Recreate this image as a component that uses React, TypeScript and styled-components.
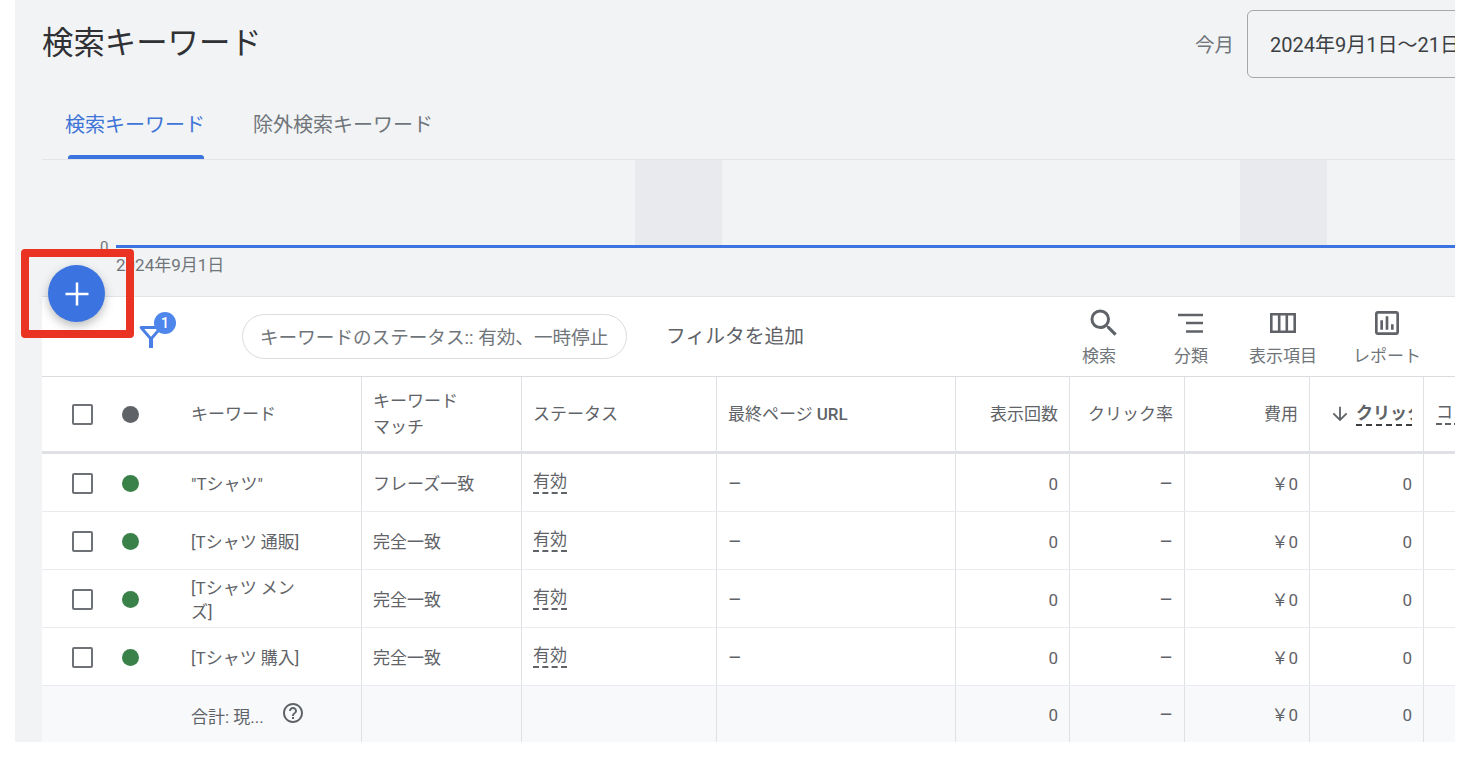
import React from 'react';
import styled, { createGlobalStyle } from 'styled-components';
import { MdSearch, MdOutlineAssessment, MdHelpOutline, MdArrowDownward } from 'react-icons/md';

const GlobalStyle = createGlobalStyle`
  html, body {
    margin: 0;
    background: #fff;
    font-family: Roboto, "Noto Sans CJK JP", sans-serif;
  }
  * { box-sizing: border-box; }
`;

const Panel = styled.div`
  position: relative;
  width: 1440px;
  height: 742px;
  margin-left: 15px;
  padding-left: 27px;
  background: #f1f3f5;
  overflow: hidden;
`;

const Header = styled.header`
  display: grid;
  grid-template-columns: 1153px auto 1fr;
  align-items: center;
  height: 100px;
  padding-bottom: 12px;
`;

const Title = styled.h1`
  margin: 0 0 7px;
  font-size: 31.4px;
  font-weight: 400;
  color: #303134;
  white-space: nowrap;
`;

const RangeLabel = styled.span`
  margin: 0 13px 2px 0;
  font-size: 19.5px;
  color: #70757a;
  white-space: nowrap;
`;

const DateBox = styled.div`
  width: 260px;
  height: 68px;
  padding: 0 0 2px 22px;
  display: flex;
  align-items: center;
  border: 1px solid #a6a8ab;
  border-radius: 6px;
  font-size: 20px;
  color: #3c4043;
  white-space: nowrap;
`;

const Tabs = styled.nav`
  display: flex;
  height: 60px;
  border-bottom: 1px solid #e2e4e8;
`;

const Tab = styled.div<{ $active?: boolean }>`
  position: relative;
  margin-left: ${p => (p.$active ? '23px' : '48px')};
  padding-top: 9px;
  font-size: 20px;
  color: ${p => (p.$active ? '#3f74d8' : '#70757a')};
  white-space: nowrap;

  ${p =>
    p.$active &&
    `&::after {
      content: '';
      position: absolute;
      left: 3px;
      right: 1px;
      bottom: 0;
      height: 4px;
      background: #3b73e0;
      border-radius: 3px 3px 0 0;
    }`}
`;

const Chart = styled.div`
  position: relative;
  height: 136px;

  svg { display: block; }
`;

const AxisZero = styled.span`
  position: absolute;
  left: 58px;
  top: 78px;
  font-size: 15px;
  color: #70757a;
`;

const AxisDate = styled.span`
  position: absolute;
  left: 74px;
  top: 91px;
  font-size: 17px;
  color: #70757a;
`;

const Card = styled.section`
  background: #fff;
  border-top: 1px solid #e2e4e8;
`;

const Toolbar = styled.div`
  display: flex;
  align-items: center;
  height: 80px;
  padding-left: 97px;
  border-bottom: 1px solid #dadce0;
`;

const FilterMark = styled.div`
  position: relative;
  width: 26px;
  height: 24px;
  flex: none;

  svg { display: block; }
`;

const Badge = styled.span`
  position: absolute;
  left: 15px;
  top: -13px;
  width: 22px;
  height: 22px;
  border-radius: 50%;
  background: #4f86ec;
  color: #fff;
  font-size: 14px;
  font-weight: 500;
  display: flex;
  align-items: center;
  justify-content: center;
`;

const Chip = styled.div`
  margin-left: 77px;
  margin-top: -1px;
  width: 385px;
  height: 45px;
  padding: 0 0 2px 17px;
  display: flex;
  align-items: center;
  border: 1px solid #dadce0;
  border-radius: 23px;
  font-size: 18.6px;
  color: #70757a;
  white-space: nowrap;
`;

const AddFilter = styled.div`
  margin-left: 39px;
  margin-top: -5px;
  font-size: 19.8px;
  color: #5f6368;
  white-space: nowrap;
`;

const Actions = styled.div`
  display: flex;
  margin-left: auto;
  padding-right: 10px;
`;

const Action = styled.div<{ $width: number }>`
  width: ${p => p.$width}px;
  display: flex;
  flex-direction: column;
  align-items: center;
  color: #5f6368;
`;

const IconSlot = styled.div<{ $shift?: number }>`
  height: 36px;
  display: flex;
  align-items: center;
  justify-content: center;
  margin-left: ${p => p.$shift ?? 0}px;

  svg { display: block; }
`;

const ActionLabel = styled.span`
  margin-top: 3px;
  font-size: 17px;
  line-height: 24px;
  color: #70757a;
  white-space: nowrap;
`;

const Row = styled.div<{ $kind: 'head' | 'body' | 'total' }>`
  display: grid;
  grid-template-columns: 320px 160px 195px 239px 114px 115px 125px 114px 31px;
  height: ${p => (p.$kind === 'head' ? '77px' : p.$kind === 'total' ? '56px' : '58px')};
  background: ${p => (p.$kind === 'total' ? '#f8f9fa' : '#fff')};
  border-bottom: ${p =>
    p.$kind === 'head' ? '3px solid #dfe1e5' : p.$kind === 'total' ? 'none' : '1px solid #e8eaed'};
  font-size: 17px;
  color: #5f6368;
`;

const Cell = styled.div<{ $right?: boolean; $clip?: boolean; $head?: boolean }>`
  display: flex;
  align-items: center;
  justify-content: ${p => (p.$right ? 'flex-end' : 'flex-start')};
  padding: ${p => (p.$head ? '0' : '2px')} ${p => (p.$clip ? '0' : '11px')} 0 ${p => (p.$clip ? '12px' : '11px')};
  border-right: 1px solid #dfe1e5;
  overflow: hidden;
  white-space: nowrap;
  line-height: 26px;

  &:last-child { border-right: none; }
`;

const MatchHead = styled.span`
  white-space: normal;
  width: 100px;
`;

const UrlText = styled.b`
  margin-left: 4px;
  font-weight: 500;
`;

const KeywordCell = styled.div<{ $head?: boolean }>`
  display: grid;
  grid-template-columns: 50px 69px 1fr;
  align-items: center;
  padding: ${p => (p.$head ? '0' : '2px')} 0 0 30px;
  border-right: 1px solid #dfe1e5;
`;

const Check = styled.span`
  display: block;
  width: 21px;
  height: 21px;
  border: 2px solid #6e7175;
  border-radius: 2px;
`;

const Dot = styled.span<{ $color: string }>`
  display: block;
  width: 17px;
  height: 17px;
  border-radius: 50%;
  background: ${p => p.$color};
`;

const KeywordText = styled.span`
  width: 112px;
  line-height: 24px;
  color: #5f6368;
  word-break: break-all;
`;

const TotalLabel = styled.span`
  grid-column: 3;
  display: flex;
  align-items: center;
  gap: 17px;
  white-space: nowrap;

  svg { display: block; margin-top: -4px; }
`;

const Underlined = styled.span`
  border-bottom: 2px dashed #5f6368;
  line-height: 22px;
  margin-top: -3px;
`;

const Dash = styled.span`
  font-size: 21px;
  line-height: 26px;
`;

const SortHead = styled.span`
  display: flex;
  align-items: center;
  gap: 5px;
  margin-left: 7px;
  font-weight: 700;
  color: #5f6368;

  svg { flex: none; }
`;

const SortLabel = styled.span`
  width: 56px;
  overflow: hidden;
  border-bottom: 2px dashed #3c4043;
  line-height: 22px;
`;

const Fab = styled.div`
  position: absolute;
  left: 33px;
  top: 265px;
  width: 57px;
  height: 57px;
  border-radius: 50%;
  background: #3b73e0;
  color: #fff;
  display: flex;
  align-items: center;
  justify-content: center;
  box-shadow: 0 4px 10px rgba(60, 64, 67, 0.35);

  svg { display: block; }
`;

const Highlight = styled.div`
  position: absolute;
  left: 6px;
  top: 249px;
  width: 113px;
  height: 89px;
  border: 8px solid #ea3323;
  border-radius: 4px;
`;

const SortIcon = () => (
  <svg width="26" height="20" viewBox="0 0 26 20" fill="none" stroke="currentColor" strokeWidth="2.6">
    <path d="M0 2h25M8 10h17M8 18.500h17" />
  </svg>
);

const ColumnsIcon = () => (
  <svg width="26" height="20" viewBox="0 0 26 20" fill="none" stroke="currentColor" strokeWidth="2.6">
    <path d="M1.300 1.300h23.400v17.400H1.300zM9.200 1.300v17.400M16.800 1.300v17.400" />
  </svg>
);

const FilterIcon = () => (
  <svg width="24" height="24" viewBox="0 0 24 24" fill="none" stroke="#4a7fe6" strokeWidth="2.800">
    <path d="M2 2.500h20L12 14 2 2.500z" strokeLinejoin="round" />
    <path d="M12 13v10" strokeWidth="4" />
  </svg>
);

const PlusIcon = () => (
  <svg width="24" height="24" viewBox="0 0 24 24" fill="none" stroke="currentColor" strokeWidth="2.500">
    <path d="M12 0.500v23M0.500 12h23" />
  </svg>
);

const rows = [
  { keyword: '"Tシャツ"', match: 'フレーズ一致' },
  { keyword: '[Tシャツ 通販]', match: '完全一致' },
  { keyword: '[Tシャツ メンズ]', match: '完全一致' },
  { keyword: '[Tシャツ 購入]', match: '完全一致' },
];

const App: React.FC = () => (
  <>
    <GlobalStyle />
    <Panel>
      <Header>
        <Title>検索キーワード</Title>
        <RangeLabel>今月</RangeLabel>
        <DateBox>2024年9月1日〜21日</DateBox>
      </Header>
      <Tabs>
        <Tab $active>検索キーワード</Tab>
        <Tab>除外検索キーワード</Tab>
      </Tabs>
      <Chart>
        <svg width="1413" height="136" viewBox="0 0 1413 136">
          <rect x="593" y="0" width="87" height="85" fill="#e8eaed" />
          <rect x="1198" y="0" width="87" height="85" fill="#e8eaed" />
          <rect x="74" y="85" width="1339" height="3" fill="#3b73e0" />
        </svg>
        <AxisZero>0</AxisZero>
        <AxisDate>2024年9月1日</AxisDate>
      </Chart>
      <Card>
        <Toolbar>
          <FilterMark>
            <FilterIcon />
            <Badge>1</Badge>
          </FilterMark>
          <Chip>キーワードのステータス:: 有効、一時停止</Chip>
          <AddFilter>フィルタを追加</AddFilter>
          <Actions>
            <Action $width={92}>
              <IconSlot $shift={10}><MdSearch size={36} /></IconSlot>
              <ActionLabel>検索</ActionLabel>
            </Action>
            <Action $width={92}>
              <IconSlot><SortIcon /></IconSlot>
              <ActionLabel>分類</ActionLabel>
            </Action>
            <Action $width={92}>
              <IconSlot><ColumnsIcon /></IconSlot>
              <ActionLabel>表示項目</ActionLabel>
            </Action>
            <Action $width={116}>
              <IconSlot><MdOutlineAssessment size={32} /></IconSlot>
              <ActionLabel>レポート</ActionLabel>
            </Action>
          </Actions>
        </Toolbar>
        <Row $kind="head">
          <KeywordCell $head>
            <Check />
            <Dot $color="#5f6368" />
            <KeywordText>キーワード</KeywordText>
          </KeywordCell>
          <Cell $head><MatchHead>キーワード マッチ</MatchHead></Cell>
          <Cell $head>ステータス</Cell>
          <Cell $head>最終ページ <UrlText>URL</UrlText></Cell>
          <Cell $head $right>表示回数</Cell>
          <Cell $head $right>クリック率</Cell>
          <Cell $head $right>費用</Cell>
          <Cell $head $clip>
            <SortHead>
              <MdArrowDownward size={22} />
              <SortLabel>クリック数</SortLabel>
            </SortHead>
          </Cell>
          <Cell $head $clip><Underlined>コスト</Underlined></Cell>
        </Row>
        {rows.map(r => (
          <Row $kind="body" key={r.keyword}>
            <KeywordCell>
              <Check />
              <Dot $color="#3a8049" />
              <KeywordText>{r.keyword}</KeywordText>
            </KeywordCell>
            <Cell>{r.match}</Cell>
            <Cell><Underlined>有効</Underlined></Cell>
            <Cell><Dash>–</Dash></Cell>
            <Cell $right>0</Cell>
            <Cell $right><Dash>–</Dash></Cell>
            <Cell $right>￥0</Cell>
            <Cell $right>0</Cell>
            <Cell />
          </Row>
        ))}
        <Row $kind="total">
          <KeywordCell>
            <TotalLabel>
              合計: 現...
              <MdHelpOutline size={24} />
            </TotalLabel>
          </KeywordCell>
          <Cell />
          <Cell />
          <Cell />
          <Cell $right>0</Cell>
          <Cell $right><Dash>–</Dash></Cell>
          <Cell $right>￥0</Cell>
          <Cell $right>0</Cell>
          <Cell />
        </Row>
      </Card>
      <Highlight />
      <Fab>
        <PlusIcon />
      </Fab>
    </Panel>
  </>
);

export default App;
